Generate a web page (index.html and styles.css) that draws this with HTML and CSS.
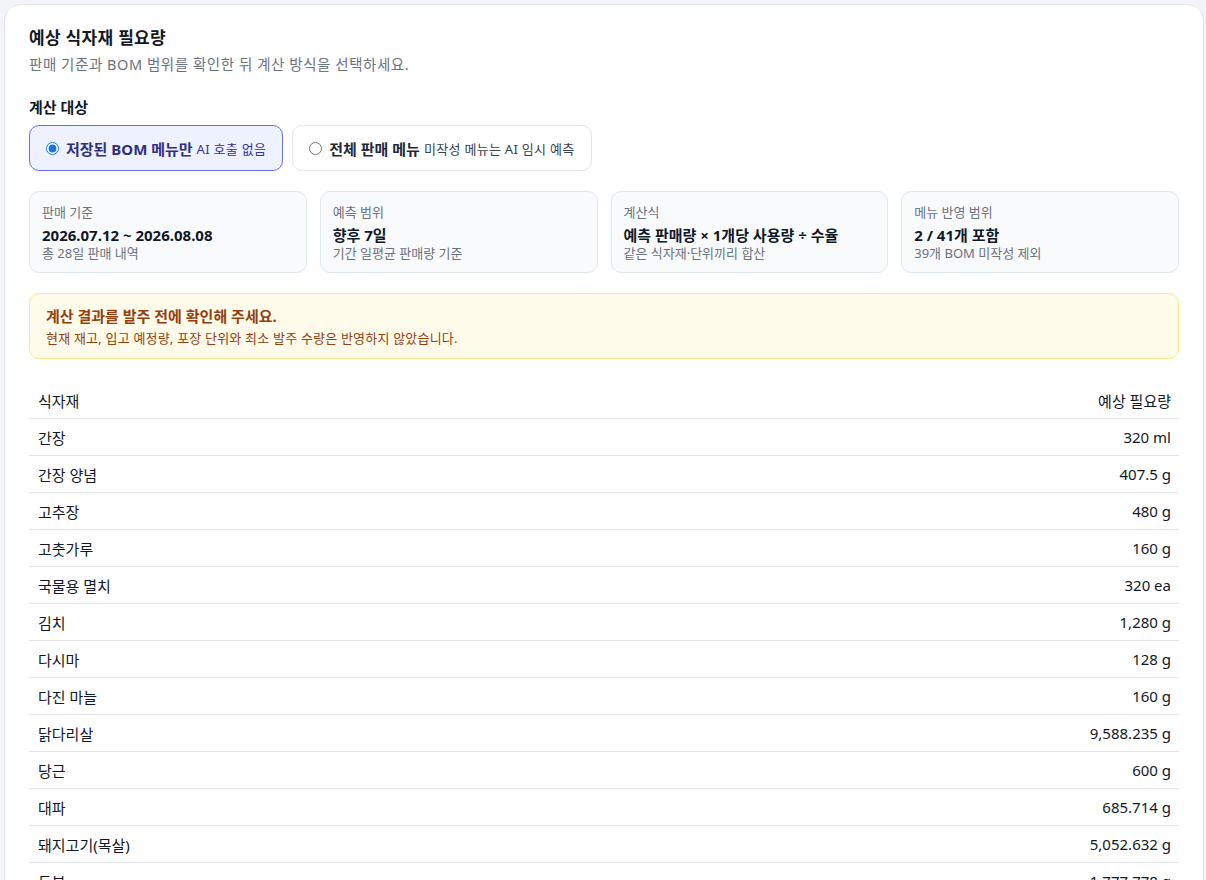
FILE: index.html
```html
<!DOCTYPE html>
<html lang="ko">
<head>
<meta charset="utf-8">
<title>예상 식자재 필요량</title>
<link rel="stylesheet" href="styles.css">
</head>
<body>
<section class="card">
  <h1 class="title">예상 식자재 필요량</h1>
  <p class="subtitle">판매 기준과 BOM 범위를 확인한 뒤 계산 방식을 선택하세요.</p>

  <h2 class="section-label">계산 대상</h2>
  <div class="options">
    <label class="option option-active">
      <input type="radio" name="target" checked>
      <span class="option-main">저장된 BOM 메뉴만</span>
      <span class="option-sub">AI 호출 없음</span>
    </label>
    <label class="option">
      <input type="radio" name="target">
      <span class="option-main">전체 판매 메뉴</span>
      <span class="option-sub">미작성 메뉴는 AI 임시 예측</span>
    </label>
  </div>

  <div class="stats">
    <div class="stat">
      <div class="stat-label">판매 기준</div>
      <div class="stat-value">2026.07.12 ~ 2026.08.08</div>
      <div class="stat-sub">총 28일 판매 내역</div>
    </div>
    <div class="stat">
      <div class="stat-label">예측 범위</div>
      <div class="stat-value">향후 7일</div>
      <div class="stat-sub">기간 일평균 판매량 기준</div>
    </div>
    <div class="stat">
      <div class="stat-label">계산식</div>
      <div class="stat-value">예측 판매량 × 1개당 사용량 ÷ 수율</div>
      <div class="stat-sub">같은 식자재·단위끼리 합산</div>
    </div>
    <div class="stat">
      <div class="stat-label">메뉴 반영 범위</div>
      <div class="stat-value">2 / 41개 포함</div>
      <div class="stat-sub">39개 BOM 미작성 제외</div>
    </div>
  </div>

  <div class="notice">
    <div class="notice-title">계산 결과를 발주 전에 확인해 주세요.</div>
    <div class="notice-sub">현재 재고, 입고 예정량, 포장 단위와 최소 발주 수량은 반영하지 않았습니다.</div>
  </div>

  <table class="table">
    <thead>
      <tr><th>식자재</th><th class="num">예상 필요량</th></tr>
    </thead>
    <tbody>
      <tr><td>간장</td><td class="num">320 ml</td></tr>
      <tr><td>간장 양념</td><td class="num">407.5 g</td></tr>
      <tr><td>고추장</td><td class="num">480 g</td></tr>
      <tr><td>고춧가루</td><td class="num">160 g</td></tr>
      <tr><td>국물용 멸치</td><td class="num">320 ea</td></tr>
      <tr><td>김치</td><td class="num">1,280 g</td></tr>
      <tr><td>다시마</td><td class="num">128 g</td></tr>
      <tr><td>다진 마늘</td><td class="num">160 g</td></tr>
      <tr><td>닭다리살</td><td class="num">9,588.235 g</td></tr>
      <tr><td>당근</td><td class="num">600 g</td></tr>
      <tr><td>대파</td><td class="num">685.714 g</td></tr>
      <tr><td>돼지고기(목살)</td><td class="num">5,052.632 g</td></tr>
      <tr><td>두부</td><td class="num">1,777.778 g</td></tr>
      <tr><td>떡</td><td class="num">800 g</td></tr>
    </tbody>
  </table>
</section>
</body>
</html>
```

FILE: styles.css
```css
html {
  background: #f3f4f8;
}
body {
  margin: 0;
  padding: 4px 2px 4px 4px;
  font-family: "Noto Sans", "Noto Sans CJK KR", sans-serif;
  color: #111827;
}
.card {
  background: #ffffff;
  border: 1px solid #e3e5ec;
  border-radius: 16px;
  padding: 22px 24px 24px;
}
.title {
  margin: 0;
  font-size: 17px;
  line-height: 22px;
  font-weight: 700;
  letter-spacing: 0.3px;
  color: #111827;
}
.subtitle {
  margin: 5px 0 0;
  font-size: 14.5px;
  line-height: 20px;
  letter-spacing: 0.55px;
  color: #6b7280;
}
.section-label {
  margin: 23px 0 0;
  font-size: 15px;
  line-height: 20px;
  font-weight: 700;
  color: #111827;
}
.options {
  display: flex;
  gap: 9px;
  margin-top: 8px;
}
.option {
  display: flex;
  align-items: center;
  height: 46px;
  box-sizing: border-box;
  padding: 0 16px 0 14px;
  border: 1px solid #e3e6ee;
  border-radius: 10px;
  background: #ffffff;
  cursor: pointer;
}
.option input {
  margin: 0 7px 0 2px;
  width: 13px;
  height: 13px;
  accent-color: #1a73e8;
}
.option-active {
  background: #eef2ff;
  border-color: #6d6cf0;
}
.option-main {
  font-size: 15px;
  font-weight: 700;
  color: #1f2937;
}
.option-active .option-main {
  color: #312e81;
}
.option-sub {
  margin-left: 4px;
  font-size: 13px;
  letter-spacing: 0.3px;
  color: #374151;
}
.option-active .option-sub {
  color: #3730a3;
}
.stats {
  display: grid;
  grid-template-columns: repeat(4, 1fr);
  gap: 13px;
  margin-top: 20px;
}
.stat {
  background: #f8fafc;
  border: 1px solid #e2e8f0;
  border-radius: 10px;
  padding: 11px 12px 10px;
}
.stat-label {
  font-size: 13px;
  line-height: 18px;
  color: #6b7280;
}
.stat-value {
  margin-top: 4px;
  font-size: 15px;
  line-height: 20px;
  font-weight: 700;
  color: #111827;
}
.stat-sub {
  font-size: 13px;
  line-height: 17px;
  color: #6b7280;
}
.notice {
  margin-top: 20px;
  background: #fffbeb;
  border: 1px solid #fde68a;
  border-radius: 10px;
  padding: 12px 16px 11px;
}
.notice-title {
  font-size: 15px;
  line-height: 20px;
  font-weight: 700;
  color: #92400e;
}
.notice-sub {
  margin-top: 3px;
  font-size: 13px;
  line-height: 18px;
  letter-spacing: 0.2px;
  color: #92400e;
}
.table {
  width: 100%;
  margin-top: 23px;
  border-collapse: collapse;
  font-size: 15px;
}
.table th,
.table td {
  height: 36px;
  padding: 0 8px 0 9px;
  text-align: left;
  font-weight: 400;
  color: #111827;
  border-bottom: 1px solid #e5e7eb;
}
.table .num {
  text-align: right;
}
```
